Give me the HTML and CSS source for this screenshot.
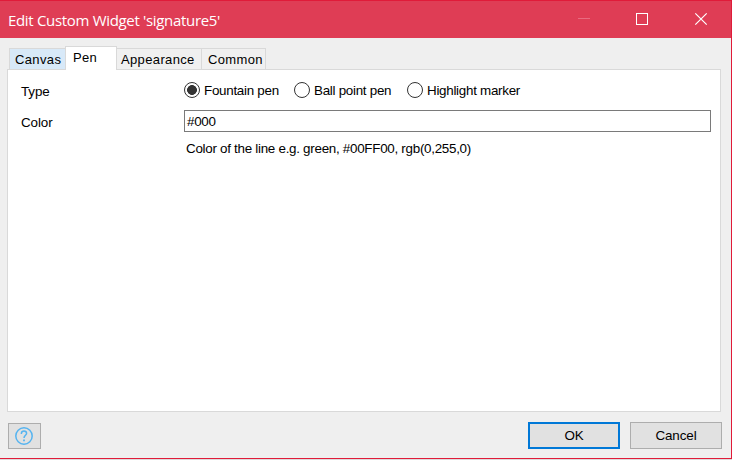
FILE: index.html
```html
<!DOCTYPE html>
<html lang="en">
<head>
<meta charset="utf-8">
<title>Edit Custom Widget 'signature5'</title>
<link rel="stylesheet" href="styles.css">
</head>
<body>
<div class="window">
  <header class="titlebar">
    <h1 class="title">Edit Custom Widget 'signature5'</h1>
    <svg class="controls" width="161" height="37" viewBox="0 0 161 37" fill="none">
      <path d="M8 17.5H20" stroke="#e96b80"/>
      <rect x="66.5" y="12.5" width="11" height="11" stroke="#fff"/>
      <path d="M125.3 12.3L136.7 23.7M136.7 12.3L125.3 23.7" stroke="#fff" stroke-width="1.2"/>
    </svg>
  </header>
  <main class="content">
    <nav class="tabs">
      <span class="tab tab-canvas">Canvas</span>
      <span class="tab tab-pen">Pen</span>
      <span class="tab tab-appearance">Appearance</span>
      <span class="tab tab-common">Common</span>
    </nav>
    <section class="panel">
      <div class="row row-type">
        <span class="label">Type</span>
        <div class="options">
          <label class="option fountain"><i class="radio checked"></i><span>Fountain pen</span></label>
          <label class="option ball"><i class="radio"></i><span>Ball point pen</span></label>
          <label class="option marker"><i class="radio"></i><span>Highlight marker</span></label>
        </div>
      </div>
      <div class="row row-color">
        <span class="label color-label">Color</span>
        <div class="field">#000</div>
      </div>
      <p class="hint">Color of the line e.g. green, #00FF00, rgb(0,255,0)</p>
    </section>
  </main>
  <footer class="footer">
    <button class="help" aria-label="Help">
      <svg width="20" height="20" viewBox="0 0 20 20" fill="none" stroke="#56b4f0" stroke-width="1.5">
        <circle cx="10" cy="10" r="8.2"/>
        <path d="M7.4 8V7.2Q7.6 5 10 5T12.6 7.2C12.6 9.2 10 9.3 10 12"/>
        <path d="M10 13.4V15.2" stroke-width="1.8"/>
      </svg>
    </button>
    <button class="button ok">OK</button>
    <button class="button cancel">Cancel</button>
  </footer>
</div>
</body>
</html>
```
FILE: styles.css
```css
* { box-sizing: border-box; }
body {
  margin: 0;
  width: 732px;
  height: 460px;
  overflow: hidden;
  background: #dcdcdc;
  color: #000;
  font: 13.4px/16px "Liberation Sans", Arial, sans-serif;
  letter-spacing: -0.28px;
}
.window {
  display: flex;
  flex-direction: column;
  height: 459px;
  background: #efefef;
  border: solid #e01b39;
  border-width: 1px 1px 1px 0;
}
.titlebar {
  display: flex;
  justify-content: space-between;
  height: 37px;
  padding-left: 8px;
  background: #df3d55;
}
.title {
  margin: 0;
  color: #fff;
  font: 400 15px/38px "Open Sans", sans-serif;
  letter-spacing: -0.32px;
  white-space: nowrap;
}
.content { padding: 8px 10px 0 7px; }
.tabs {
  display: flex;
  align-items: flex-end;
  height: 23px;
  padding-left: 2px;
  font-size: 13px;
  letter-spacing: 0.36px;
}
.tab {
  height: 21px;
  padding: 3px 0 0 5px;
  border: 1px solid #d9d9d9;
  border-width: 1px 1px 0 0;
  background: #f0f0f0;
  white-space: nowrap;
}
.tab-canvas {
  width: 56px;
  border-left-width: 1px;
  border-right: 0;
  background: #d8e9f8;
}
.tab-pen {
  position: relative;
  width: 52px;
  height: 24px;
  margin-bottom: -1px;
  padding-left: 7px;
  border-left-width: 1px;
  background: #fff;
}
.tab-appearance { width: 85px; padding-left: 4px; }
.tab-common { width: 64px; padding-left: 6px; }
.panel {
  height: 343px;
  padding: 11px 9px 0 13px;
  border: 1px solid #d9d9d9;
  background: #fff;
}
.row { display: flex; }
.label { width: 163px; padding-top: 3px; letter-spacing: -0.1px; }
.options { display: flex; height: 18px; }
.option { display: flex; gap: 4px; white-space: nowrap; padding-top: 1px; }
.option span { padding-top: 1px; }
.fountain { width: 110px; }
.ball { width: 113px; }
.radio {
  flex: none;
  width: 16px;
  height: 16px;
  border: 1px solid #333;
  border-radius: 50%;
}
.checked { background: radial-gradient(circle, #333 4.6px, #fff 5.2px); }
.row-color { height: 22px; margin-top: 10px; }
.color-label { padding-top: 5px; }
.field {
  width: 527px;
  height: 22px;
  padding: 3px 2px 1px;
  border: 1px solid #7a7a7a;
  background: #fff;
}
.hint { margin: 9px 0 0 165px; white-space: nowrap; }
.footer {
  display: flex;
  align-items: flex-end;
  height: 37px;
  padding: 0 9px 0 8px;
}
.help, .button {
  display: flex;
  align-items: center;
  justify-content: center;
  padding: 0;
  border: 1px solid #adadad;
  background: #e1e1e1;
  color: #000;
  font: inherit;
  letter-spacing: -0.1px;
}
.help { width: 33px; height: 26px; padding-right: 1px; }
.button { width: 92px; height: 27px; }
.ok { margin-left: auto; border: 2px solid #0078d7; }
.cancel { margin-left: 10px; }
```
